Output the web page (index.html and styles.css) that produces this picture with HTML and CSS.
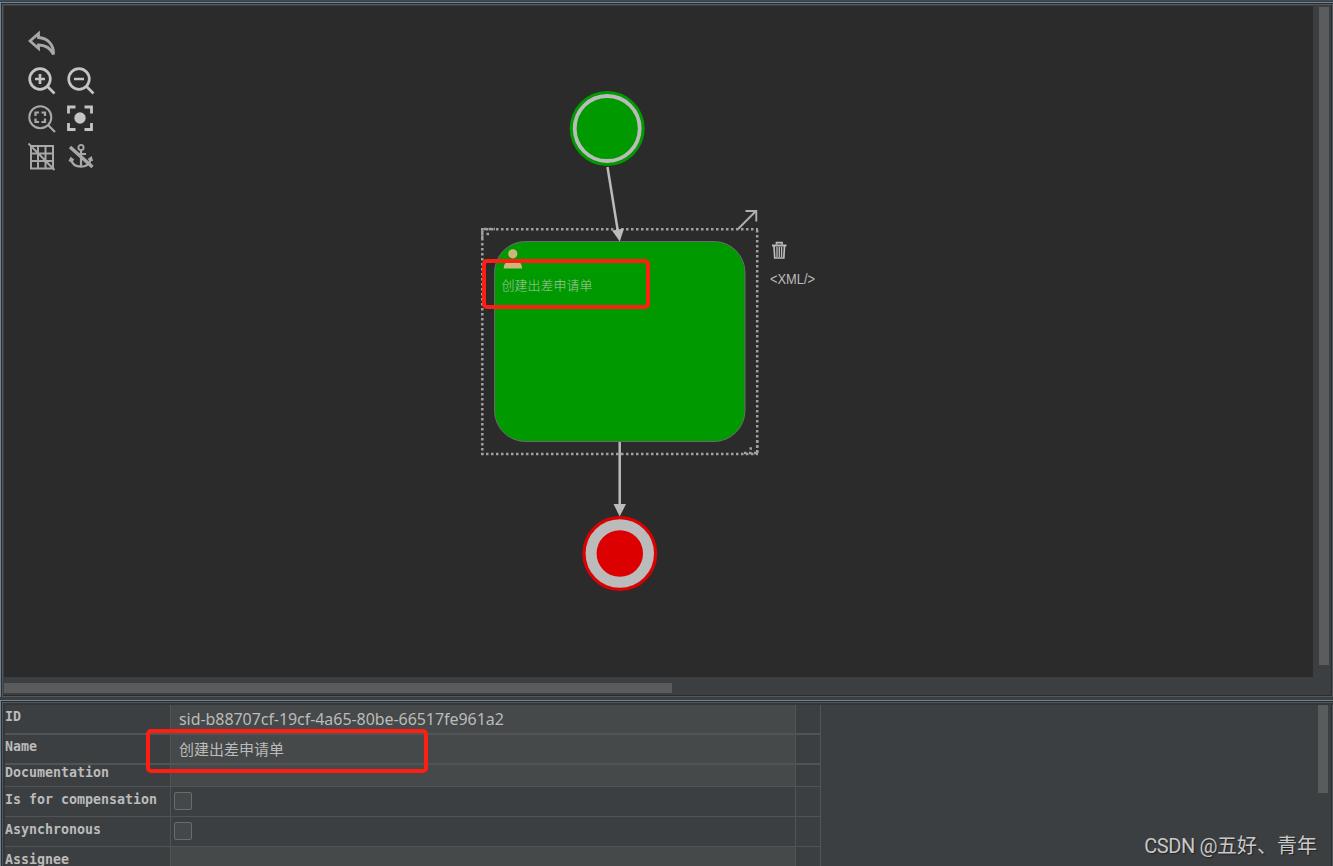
FILE: index.html
```html
<!DOCTYPE html>
<html lang="zh-CN">
<head>
  <meta charset="UTF-8" />
  <meta name="viewport" content="width=device-width, initial-scale=1.0" />
  <title>BPMN Designer</title>
  <link rel="stylesheet" href="styles.css">
</head>
<body>
  <div class="editor">
    <!-- Diagram -->
    <div class="pane diagram-pane">
      <div class="canvas">
        <div class="toolbar">
          <svg class="tool dim" viewBox="0 0 28 28"><path d="M2 12 L10.500 4.500 V8.500 C19 9 26 15 25.500 25.500 C22.500 19 18 16 10.500 16 V19.500 Z" stroke-width="2.800"/></svg>
          <span></span>
          <svg class="tool" viewBox="0 0 28 28"><circle cx="12" cy="12" r="10.300" stroke-width="2.700"/><path d="M19.500 19.500 L26.500 26.500 M12 7 V17 M7 12 H17" stroke-width="2.700"/></svg>
          <svg class="tool" viewBox="0 0 28 28"><circle cx="12" cy="12" r="10.300" stroke-width="2.700"/><path d="M19.500 19.500 L26.500 26.500 M7 12 H17" stroke-width="2.700"/></svg>
          <svg class="tool dim" viewBox="0 0 28 28"><circle cx="12.300" cy="12.300" r="11" stroke-width="2"/><path d="M20 20 L27 27 M7.500 11 V7.500 H11 M13.500 7.500 H17 V11 M17 13.500 V17 H13.500 M11 17 H7.500 V13.500" stroke-width="2.200"/></svg>
          <svg class="tool" viewBox="0 0 28 28"><circle class="dot" cx="13" cy="13" r="5.700"/><path d="M1.500 8.500 V2 H8.500 M17.500 2 H24.500 V8.500 M24.500 18 V24.500 H17.500 M8.500 24.500 H1.500 V18" stroke-width="2.800"/></svg>
          <svg class="tool dim" viewBox="0 0 28 28"><path d="M3 3 H25 V25.500 H3 Z M10 3 V25 M17.500 3 V25 M3 10.500 H25 M3 18 H25 M0.500 0.500 L26.500 27" stroke-width="2"/></svg>
          <svg class="tool dim" viewBox="0 0 28 28"><circle cx="14" cy="4.500" r="2.600" stroke-width="1.900"/><path d="M14 7 V23 M9.500 11 H19" stroke-width="2.200"/><path d="M4 16 C5 21 9 23.700 14 23.700 C19 23.700 22.500 21 24 16 M2.500 18.500 L4 15.500 L6.500 17.500 M21.500 17 L24 15 L25 18" stroke-width="2.300"/><path d="M3 4 L25.500 24" stroke-width="3.400"/></svg>
        </div>

        <svg class="diagram" viewBox="0 0 1309 671">
          <g transform="translate(-4 -6)">
            <circle cx="607.200" cy="128.500" r="37.500" fill="#009900"/>
            <circle cx="607.200" cy="128.500" r="32.500" fill="none" stroke="#bbbbbb" stroke-width="3.800"/>

            <rect x="494.500" y="241.500" width="250.500" height="200" rx="31" fill="#009900" stroke="#6b6b6b"/>
            <g fill="#cdb679">
              <circle cx="512.800" cy="253.800" r="4.600"/>
              <path d="M503.700 268.500 C503.700 264 506 262 509 262 H516.500 C520 262 522 264 522 268.500 Z"/>
            </g>
            <text class="task-name" x="501.500" y="290">创建出差申请单</text>

            <!-- selection frame -->
            <g class="selection">
              <path d="M481 229.300 H758"/>
              <path d="M481 454 H758"/>
              <path d="M482.300 228 V455"/>
              <path d="M757.200 230 V455"/>
              <path d="M486.500 234 H489 M484 229 H495 M482.300 230.500 V240 M744 453 H757 M749.500 448.500 H754 M757.200 440.500 V453"/>
            </g>

            <path d="M607.500 167 L618 232" stroke="#bbbbbb" stroke-width="2.500"/>
            <path d="M612 230.500 L624 228.500 L619.800 241.500 Z" fill="#bbbbbb"/>
            <path d="M619.700 442 V505" stroke="#bbbbbb" stroke-width="2.500"/>
            <path d="M613.500 504 H626 L619.700 516.500 Z" fill="#bbbbbb"/>

            <circle cx="619.800" cy="553.500" r="37.500" fill="#dd0000"/>
            <circle cx="619.800" cy="553.500" r="28.700" fill="none" stroke="#bbbbbb" stroke-width="11"/>

            <!-- element actions -->
            <path d="M738 229 L756 211 M745.500 211 H756.300 V221.500" fill="none" stroke="#afafaf" stroke-width="1.900"/>
            <g fill="none" stroke="#bbbbbb">
              <path d="M772 245.500 H786.500" stroke-width="2"/>
              <path d="M776.500 244.500 V242.700 H782 V244.500 M774 246 L774.700 258 H783.800 L784.500 246" stroke-width="1.700"/>
              <path d="M777 247 V257 M779.300 247 V257 M781.600 247 V257" stroke-width="1.300"/>
            </g>
            <text class="xml-link" x="770" y="284" textLength="45" lengthAdjust="spacingAndGlyphs">&lt;XML/&gt;</text>
          </g>
        </svg>
        <div class="mark mark-task"></div>
      </div>
      <div class="scroll-y"><div class="thumb"></div></div>
      <div class="scroll-x"><div class="thumb"></div></div>
    </div>

    <!-- Properties -->
    <div class="pane props-pane">
      <div class="props">
        <div class="label">ID</div>
        <div class="value"><span class="id-text">sid-b88707cf-19cf-4a65-80be-66517fe961a2</span></div>
        <div class="extra"></div>

        <div class="label">Name</div>
        <div class="value">创建出差申请单</div>
        <div class="extra"></div>

        <div class="label tight">Documentation</div>
        <div class="value"></div>
        <div class="extra"></div>

        <div class="label low">Is for compensation</div>
        <div class="value check"><span class="checkbox"></span></div>
        <div class="extra"></div>

        <div class="label low">Asynchronous</div>
        <div class="value check"><span class="checkbox"></span></div>
        <div class="extra"></div>

        <div class="label low">Assignee</div>
        <div class="value"></div>
        <div class="extra"></div>
      </div>
      <div class="props-scroll"><div class="thumb"></div></div>
      <div class="mark mark-name"></div>
    </div>
  </div>
  <div class="watermark"><span class="latin">CSDN @</span>五好、青年</div>
</body>
</html>
```
FILE: styles.css
```css
* {
  box-sizing: border-box;
}

body {
  margin: 0;
  height: 866px;
  overflow: hidden;
  background: #3c3f41;
  color: #bbbbbb;
  font-family: "Noto Sans", "Noto Sans CJK SC", sans-serif;
}

.editor {
  height: 866px;
  padding-top: 1px;
  display: flex;
  flex-direction: column;
  gap: 3px;
  border-top: 1px solid #3d4b5c;
}

.pane {
  position: relative;
  border-top: 1px solid #6e8595;
  border-left: 1px solid #6e8595;
}

/* Diagram pane */
.diagram-pane {
  height: 695px;
  padding: 3px 0 0 3px;
  display: grid;
  grid-template-columns: 1309px 20px;
  grid-template-rows: 671px 20px;
  box-shadow: inset 1px 1px #2b2d2f, inset 2px 2px #555759, inset 0 -1px #55585a, inset -1px 0 #55585a, inset 0 -2px #292b2d, inset -2px 0 #292b2d;
}

.canvas {
  position: relative;
  background: #2b2b2b;
}

.diagram {
  display: block;
  width: 1309px;
  height: 671px;
}

.toolbar {
  position: absolute;
  top: 23px;
  left: 24px;
  display: grid;
  grid-template-columns: 28px 28px;
  grid-auto-rows: 28px;
  gap: 10px 11px;
}

.tool {
  width: 28px;
  height: 28px;
  fill: none;
  stroke: #c4c4c4;
}

.dim {
  stroke: #a8a8a8;
}

.dot {
  fill: #c4c4c4;
  stroke: none;
}

.task-name {
  font: 300 13px "Noto Sans CJK SC", sans-serif;
  fill: #a9c7a9;
}

.xml-link {
  font: 14px "Liberation Sans", sans-serif;
  fill: #bbbbbb;
}

.selection {
  fill: none;
  stroke: #a0a0a0;
  stroke-width: 2.500;
  stroke-dasharray: 2.500 2.500;
}

.mark {
  position: absolute;
  border: 4px solid #ff1f12;
  border-radius: 5px;
}

.mark-task {
  left: 478px;
  top: 253px;
  width: 168px;
  height: 50px;
}

.scroll-y {
  padding: 1px 0 0 6px;
}

.scroll-y .thumb {
  width: 10px;
  height: 658px;
  background: #5a5c5d;
}

.scroll-x {
  padding-top: 6px;
}

.scroll-x .thumb {
  width: 668px;
  height: 10px;
  background: #5a5b5c;
}

/* Properties pane */
.props-pane {
  flex: 1;
  min-height: 0;
  padding: 4px 4px 0 4px;
  display: flex;
  justify-content: space-between;
  box-shadow: inset 1px 1px #292b2d, inset 2px 2px #55585a, inset 4px 4px #343638, inset -1px 0 #55585a, inset -2px 0 #292b2d;
}

.props {
  display: grid;
  grid-template-columns: 166px 625px 25px;
  grid-template-rows: 30px 30px 22px 30px 30px 30px;
  font-size: 15px;
}

.props > div {
  border-right: 1px solid #515354;
  border-bottom: 1px solid #515354;
}

.props > div:nth-child(-n+6) {
  border-bottom-width: 2px;
}

.label {
  padding-top: 3px;
  font: bold 13.300px/17px "DejaVu Sans Mono", monospace;
}

.label.tight {
  padding-top: 0;
  line-height: 15px;
}

.label.low {
  padding-top: 4px;
}

.value {
  padding-left: 8px;
  line-height: 29px;
  background: #45494a;
}

.id-text {
  font-size: 16px;
  letter-spacing: -0.060px;
}

.value.check {
  padding: 5px 0 0 3px;
  background: none;
}

.checkbox {
  display: block;
  width: 18px;
  height: 18px;
  border: 1px solid #6b6b6b;
  border-radius: 2px;
  background: #43494a;
}

.props-scroll {
  width: 11px;
}

.props-scroll .thumb {
  width: 10px;
  height: 88px;
  background: #595c5d;
}

.mark-name {
  left: 145px;
  top: 28px;
  width: 282px;
  height: 44px;
}

.watermark {
  position: absolute;
  right: 16px;
  bottom: 6px;
  font: 20px/28px "Liberation Sans", "Noto Sans CJK SC", sans-serif;
  color: #c8c8c8;
  text-shadow: 1px 1px 1px #222222;
}

.watermark .latin {
  font-family: Roboto, sans-serif;
  letter-spacing: -0.400px;
}
```
